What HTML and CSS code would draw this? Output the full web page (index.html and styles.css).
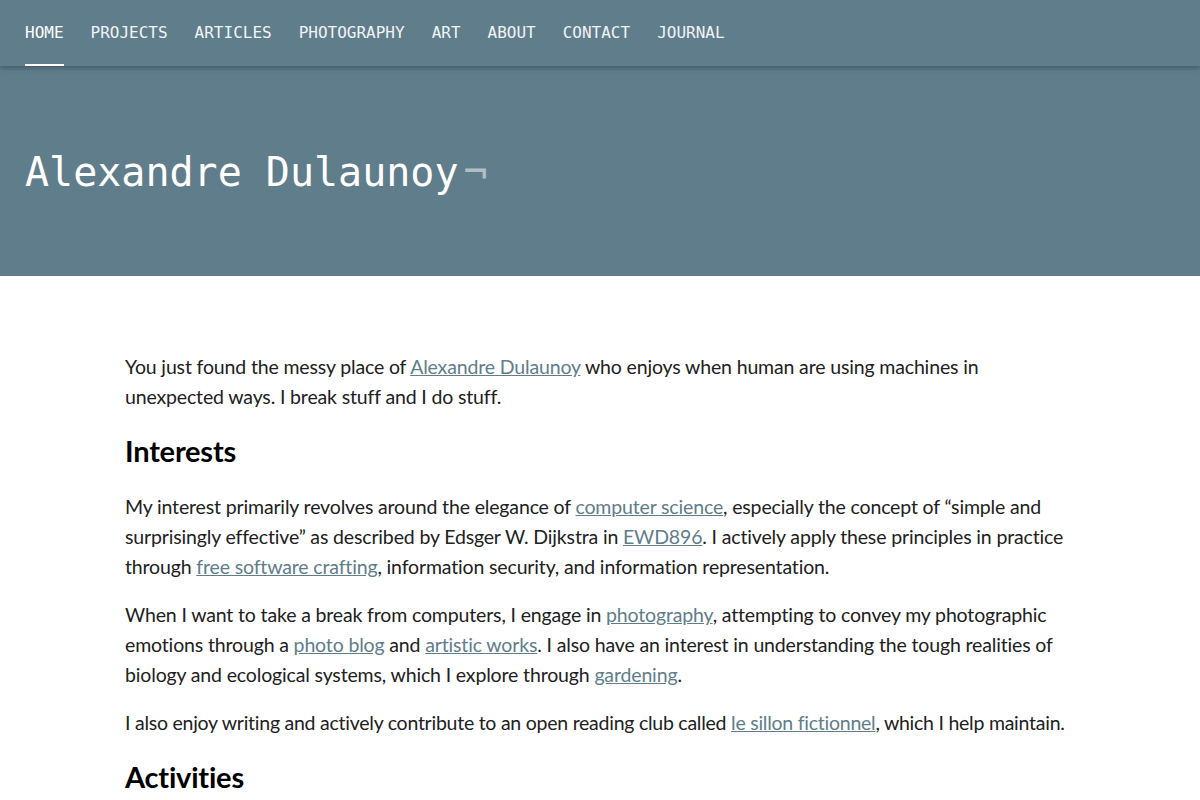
FILE: index.html
```html
<!DOCTYPE html>
<html lang="en">
<head>
<meta charset="utf-8">
<title>Alexandre Dulaunoy</title>
<link rel="stylesheet" href="styles.css">
</head>
<body>
<header class="top">
  <nav class="nav">
    <a class="nav-item active" href="#">HOME</a>
    <a class="nav-item" href="#">PROJECTS</a>
    <a class="nav-item" href="#">ARTICLES</a>
    <a class="nav-item" href="#">PHOTOGRAPHY</a>
    <a class="nav-item" href="#">ART</a>
    <a class="nav-item" href="#">ABOUT</a>
    <a class="nav-item" href="#">CONTACT</a>
    <a class="nav-item" href="#">JOURNAL</a>
  </nav>
  <div class="hero">
    <h1 class="title">Alexandre Dulaunoy<span class="cursor">¬</span></h1>
  </div>
</header>
<main class="content">
  <p>You just found the messy place of <a href="#">Alexandre Dulaunoy</a> who enjoys when human are using machines in unexpected ways. I break stuff and I do stuff.</p>
  <h2>Interests</h2>
  <p>My interest primarily revolves around the elegance of <a href="#">computer science</a>, especially the concept of “simple and surprisingly effective” as described by Edsger W. Dijkstra in <a href="#">EWD896</a>. I actively apply these principles in practice through <a href="#">free software crafting</a>, information security, and information representation.</p>
  <p>When I want to take a break from computers, I engage in <a href="#">photography</a>, attempting to convey my photographic emotions through a <a href="#">photo blog</a> and <a href="#">artistic works</a>. I also have an interest in understanding the tough realities of biology and ecological systems, which I explore through <a href="#">gardening</a>.</p>
  <p class="tight">I also enjoy writing and actively contribute to an open reading club called <a href="#">le sillon fictionnel</a>, which I help maintain.</p>
  <h2>Activities</h2>
</main>
</body>
</html>
```
FILE: styles.css
```css
html, body {
  margin: 0;
  padding: 0;
  background: #ffffff;
}
body {
  font-family: Lato, "Liberation Sans", sans-serif;
  color: #212121;
}
.top {
  background: #607d8b;
}
.nav {
  position: relative;
  z-index: 1;
  display: flex;
  gap: 27px;
  height: 66px;
  padding: 0 25px;
  background: #607d8b;
  box-shadow: 0 2px 5px rgba(0, 0, 0, 0.3);
}
.nav-item {
  display: flex;
  align-items: center;
  font-family: "DejaVu Sans Mono", monospace;
  font-size: 16px;
  color: #f1f4f6;
  text-decoration: none;
  border-bottom: 2px solid transparent;
}
.nav-item.active {
  color: #ffffff;
  border-bottom-color: #ffffff;
}
.hero {
  height: 210px;
  display: flex;
  align-items: center;
  padding: 0 25px;
}
.title {
  margin: 0;
  font-family: "DejaVu Sans Mono", monospace;
  font-weight: normal;
  font-size: 40px;
  color: #ffffff;
  padding-top: 2px;
}
.cursor {
  color: #b0bec5;
  margin-left: 5px;
}
.content {
  padding: 76px 125px 0;
  font-size: 19.5px;
  letter-spacing: -0.15px;
  line-height: 30px;
}
.content p {
  margin: 0 0 18px;
}
.content p.tight {
  letter-spacing: -0.25px;
}
.content h2 {
  margin: 21px 0 23px;
  font-size: 29px;
  line-height: 36px;
  font-weight: bold;
  letter-spacing: -0.2px;
  color: #000000;
}
.content a {
  color: #607d8b;
  text-decoration: underline;
}
```
